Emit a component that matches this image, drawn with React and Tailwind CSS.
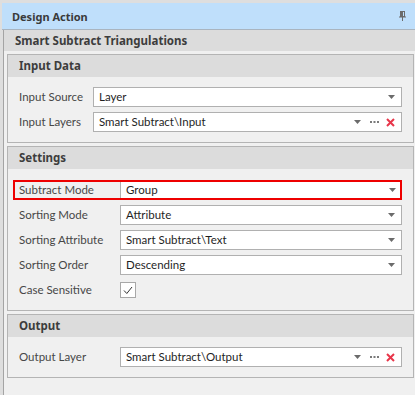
import React from "react";

function Arrow() {
    return (
        <svg width="7" height="4" viewBox="0 0 7 4" className="shrink-0">
            <path d="M0 0H7L3.5 4Z" fill="#6b6b6b" />
        </svg>
    );
}

function Dots() {
    return (
        <svg width="9" height="2" viewBox="0 0 9 2" className="shrink-0">
            <rect x="0" y="0" width="2" height="2" fill="#7a7a7a" />
            <rect x="3.5" y="0" width="2" height="2" fill="#7a7a7a" />
            <rect x="7" y="0" width="2" height="2" fill="#7a7a7a" />
        </svg>
    );
}

function Clear() {
    return (
        <svg width="9" height="9" viewBox="0 0 9 9" className="shrink-0">
            <path d="M1 1L8 8M8 1L1 8" stroke="#e8364a" strokeWidth="2" />
        </svg>
    );
}

function Field({ value, extra }) {
    return (
        <div className="flex-1 h-[20px] bg-white border border-[#b0b0b0] flex items-center pl-[5px] pr-[6px]">
            <span className="flex-1 text-[#1f1f1f]">{value}</span>
            <Arrow />
            {extra && (
                <>
                    <span className="ml-[9px]"><Dots /></span>
                    <span className="ml-[7px]"><Clear /></span>
                </>
            )}
        </div>
    );
}

function Row({ label, value, extra, labelW }) {
    return (
        <div className="flex items-center h-[20px]">
            <div className={`${labelW} shrink-0 text-[#474747]`}>{label}</div>
            <Field value={value} extra={extra} />
        </div>
    );
}

function Group({ title, children, pt = "pt-[10px]" }) {
    return (
        <div className="border border-[#b4b4b4]">
            <div className="h-[22px] bg-[#dcdcdc] flex items-center pl-[11px] font-bold font-['Noto_Sans',sans-serif] text-[11.5px] text-[#3d3d3d]">{title}</div>
            <div className={`${pt} pb-[10px] pl-[11px] pr-[11px] flex flex-col gap-[5px]`}>{children}</div>
        </div>
    );
}

export default function App() {
    return (
        <div className="w-[415px] h-[395px] bg-[#dedede] pt-[3px] pl-[2px] flex flex-col overflow-hidden font-['Lato',sans-serif] text-[11.5px] leading-none">
            <div className="h-[27px] shrink-0 bg-[#bfdffb] border-b border-[#a9b4bf] flex items-center justify-between pl-[10px] pr-[9px]">
                <span className="font-bold font-['Noto_Sans',sans-serif] text-[11px] text-[#3a3a3a]">Design Action</span>
                <svg width="7" height="10" viewBox="0 0 7 10">
                    <rect x="1.5" y="0.5" width="4" height="5" fill="none" stroke="#6b6b6b" />
                    <rect x="2" y="1" width="2" height="4" fill="#6b6b6b" />
                    <path d="M0 6H7" stroke="#6b6b6b" />
                    <path d="M3.5 6V10" stroke="#6b6b6b" />
                </svg>
            </div>
            <div className="flex-1 ml-[1px] border-l border-[#a4a4a4] bg-[#f0f0f0] flex flex-col">
                <div className="h-[21px] shrink-0 bg-[#dcdcdc] flex items-center pl-[11px] font-bold font-['Noto_Sans',sans-serif] text-[11.5px] text-[#3d3d3d]">
                    Smart Subtract Triangulations
                </div>
                <div className="pt-[3px] pl-[3px] pr-[1px] flex flex-col gap-[3px]">
                    <Group title="Input Data">
                        <Row label="Input Source" value="Layer" labelW="w-[74px]" />
                        <Row label="Input Layers" value="Smart Subtract\Input" extra labelW="w-[74px]" />
                    </Group>
                    <Group title="Settings" pt="pt-[11px]">
                        <div className="flex items-center h-[20px] -ml-[6px] border-2 border-[#ee0000]">
                            <div className="w-[105px] shrink-0 pl-[4px] text-[#474747]">Subtract Mode</div>
                            <div className="flex-1 h-full bg-white border-l border-[#b0b0b0] flex items-center pl-[5px] pr-[4px]">
                                <span className="flex-1 text-[#1f1f1f]">Group</span>
                                <Arrow />
                            </div>
                        </div>
                        <Row label="Sorting Mode" value="Attribute" labelW="w-[101px]" />
                        <Row label="Sorting Attribute" value="Smart Subtract\Text" labelW="w-[101px]" />
                        <Row label="Sorting Order" value="Descending" labelW="w-[101px]" />
                        <div className="flex items-center h-[20px]">
                            <div className="w-[101px] shrink-0 text-[#474747]">Case Sensitive</div>
                            <div className="w-[16px] h-[16px] bg-white border border-[#a8a8a8] flex items-center justify-center">
                                <svg width="10" height="9" viewBox="0 0 10 9">
                                    <path d="M1 4.5L3.8 7.5L9 1" fill="none" stroke="#333" strokeWidth="1" />
                                </svg>
                            </div>
                        </div>
                    </Group>
                    <Group title="Output">
                        <Row label="Output Layer" value="Smart Subtract\Output" extra labelW="w-[101px]" />
                    </Group>
                </div>
            </div>
        </div>
    );
}
